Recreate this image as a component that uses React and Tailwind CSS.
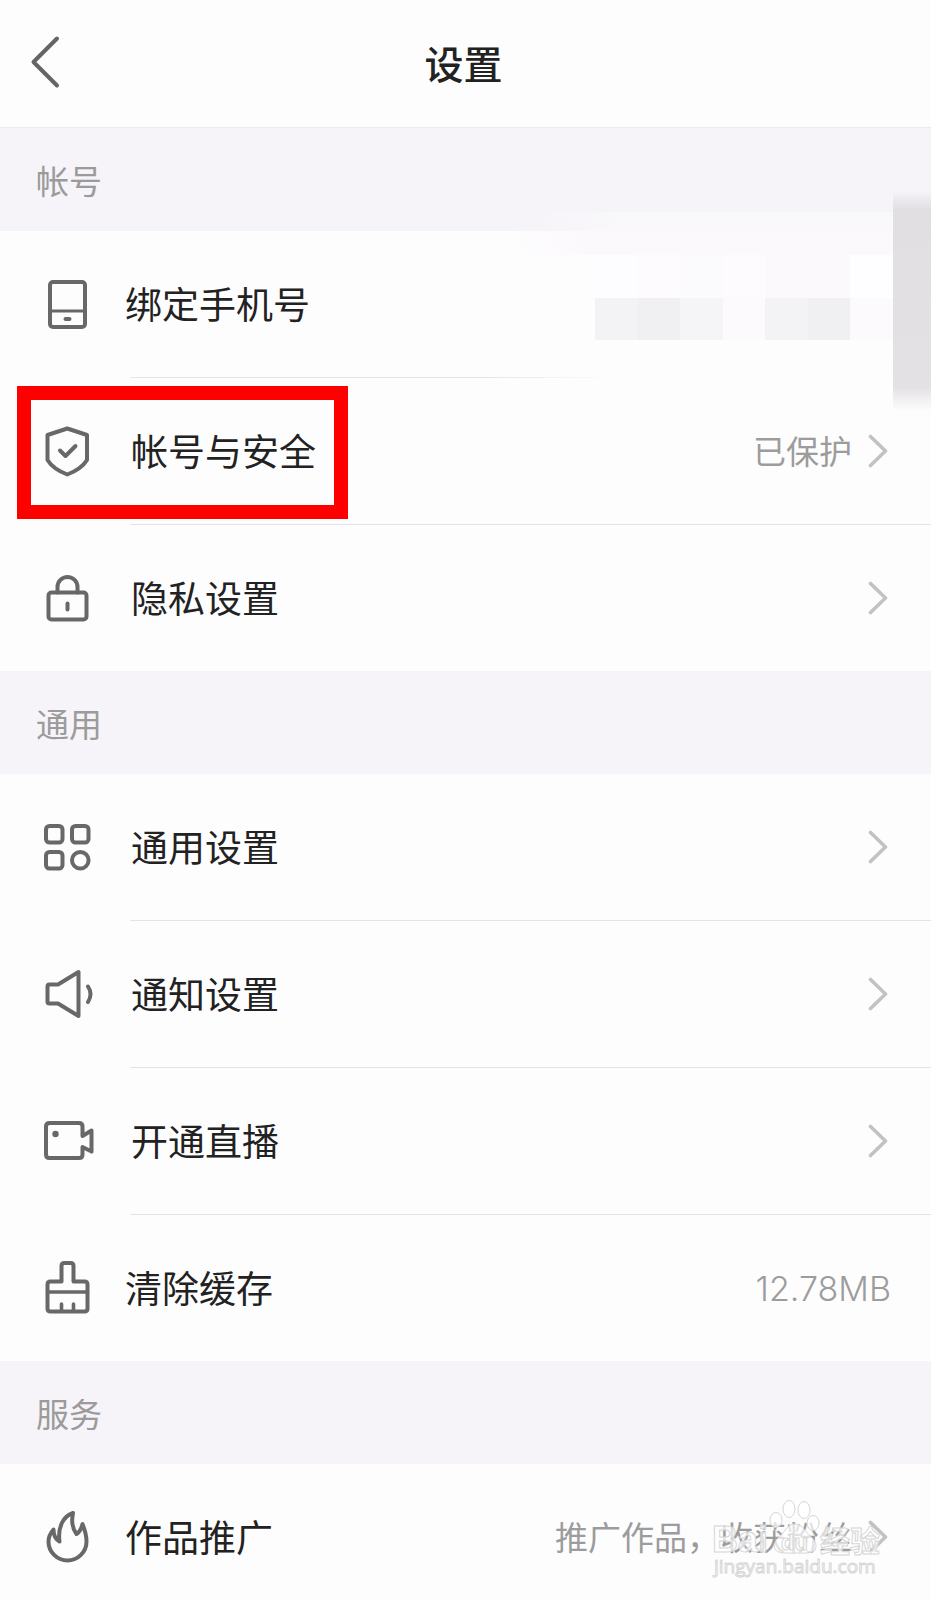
import React from "react";

const iconProps = {
  viewBox: "0 0 54 54",
  fill: "none",
  stroke: "currentColor",
  strokeWidth: 4,
  strokeLinecap: "round",
  strokeLinejoin: "round",
  "aria-hidden": true,
  className: "block size-[54px] shrink-0 text-[#686868]",
};

function PhoneIcon() {
  return (
    <svg {...iconProps}>
      <rect x="10" y="5" width="35" height="45" rx="3" />
      <path d="M10 34h35" strokeWidth="3.2" />
      <path d="M25.5 42h4" />
    </svg>
  );
}

function ShieldIcon() {
  return (
    <svg {...iconProps}>
      <path d="M27.300 4.500 47 11V36C43 42.500 35 47.500 27.300 50.500 19.500 47.500 11.500 42.500 7.500 36V11Z" />
      <path d="M20 26.500 25.500 32 35.500 22" />
    </svg>
  );
}

function LockIcon() {
  return (
    <svg {...iconProps}>
      <rect x="8.500" y="21.500" width="38" height="27" rx="3" />
      <path d="M17.500 21.500V16a10 10 0 0 1 20 0V21.500" />
      <path d="M27.500 32.500v6" />
    </svg>
  );
}

function GridIcon() {
  return (
    <svg {...iconProps}>
      <rect x="6" y="6" width="16.500" height="16.500" rx="3.500" />
      <rect x="32" y="6" width="16.500" height="16.500" rx="3.500" />
      <rect x="6" y="32" width="16.500" height="16.500" rx="3.500" />
      <circle cx="40.300" cy="40.300" r="8.300" />
    </svg>
  );
}

function SpeakerIcon() {
  return (
    <svg {...iconProps}>
      <path d="M7.500 19.500q0-2 2-2h8.500L38.500 5V49L18 36.500H9.500q-2 0-2-2Z" />
      <path d="M48 19.500q5 7.500 0 15.500" />
    </svg>
  );
}

function CameraIcon() {
  return (
    <svg {...iconProps}>
      <path d="M42.500 22V12.500q0-3.500-3.500-3.500H9.500Q6 9 6 12.500V40.500q0 3.500 3.500 3.500H39q3.500 0 3.500-3.500V33L51.500 37.500V16.500L42.500 22" />
      <circle cx="15.500" cy="20" r="3.200" fill="currentColor" stroke="none" />
    </svg>
  );
}

function BrushIcon() {
  return (
    <svg {...iconProps}>
      <path d="M21.500 20.500V5q0-3 3-3h6q3 0 3 3V20.500H44.500q3 0 3 3V47.500q0 3-3 3H10.500q-3 0-3-3V23.500q0-3 3-3Z" />
      <path d="M7.500 31h40M21.500 43v7M33.500 43v7" strokeWidth="3.600" />
    </svg>
  );
}

function FlameIcon() {
  return (
    <svg {...iconProps}>
      <path d="M33 3C23.500 6 17.500 17 19.500 31.500 16 29.500 13.500 25 13.500 19.500 10.500 23 8.500 27 8.500 31.500A19 19 0 0 0 46.500 31.500C46.500 25 44.500 19 42.500 14 41.500 18.500 39.500 22 36.500 24 32 18 31.500 10 33 3Z" />
    </svg>
  );
}

function Chevron() {
  return (
    <svg
      viewBox="0 0 20 34"
      fill="none"
      stroke="#c2c2c2"
      strokeWidth="3.600"
      strokeLinecap="round"
      strokeLinejoin="round"
      aria-hidden="true"
      className="block h-[34px] w-5 shrink-0"
    >
      <path d="M2.500 2.500 17.500 17 2.500 31.500" />
    </svg>
  );
}

function SectionTitle({ children }) {
  return (
    <h2 className="flex h-[103px] items-center bg-[#f6f4f8] px-9 text-[33px] leading-[48px] font-normal text-[#9b9b9b]">
      {children}
    </h2>
  );
}

function Row({ icon, label, value, latin, arrow = true, plain, last, highlighted, masked, children }) {
  return (
    <li className="relative">
      <button
        type="button"
        className={`flex h-[146px] w-full items-center pl-10 text-left ${arrow ? "pr-[43px]" : "pr-10"}`}
      >
        {icon}
        <span
          className={`flex-1 pb-[2px] text-[37px] leading-[54px] text-[#222222] ${plain ? "pl-[31px]" : "pl-[37px]"}`}
        >
          {label}
        </span>
        {value && (
          <span
            className={`text-[#9c9c9c] ${latin ? "pt-[2px] font-['Inter'] text-[34px] leading-[48px] font-light" : "pb-[2px] text-[33px] leading-[48px]"}`}
          >
            {value}
          </span>
        )}
        {arrow && (
          <span className="pl-4">
            <Chevron />
          </span>
        )}
      </button>
      {!last && (
        <div
          className={`ml-[130px] h-px ${masked ? "bg-linear-to-r from-[#e6e5e7] from-45% to-transparent to-60%" : "bg-[#e4e3e5]"}`}
        />
      )}
      {highlighted && (
        <div className="pointer-events-none absolute top-2 left-[17px] h-[133px] w-[331px] border-[14px] border-[#fe0000]" />
      )}
      {masked && <MaskedNumber />}
      {children}
    </li>
  );
}

function MaskedNumber() {
  return (
    <div aria-hidden="true" className="pointer-events-none">
      <div className="absolute -top-[19px] right-0 h-[19px] w-[400px] bg-linear-to-r from-transparent to-[#f9f8fb] to-25%" />
      <div className="absolute top-0 right-0 h-6 w-[430px] bg-linear-to-r from-transparent to-[#fbf9fc] to-20%" />
      <div className="absolute top-6 right-[38px] grid w-[298px] grid-cols-7">
        <i className="h-[43px] bg-[#fdfcfe]" />
        <i className="bg-[#fdfbfe]" />
        <i className="bg-[#fbfafc]" />
        <i className="bg-[#fdfbfe]" />
        <i className="bg-[#fbf9fc]" />
        <i className="bg-[#fbf9fc]" />
        <i className="bg-[#fefdff]" />
        <i className="h-[42px] bg-[#f3f2f4]" />
        <i className="bg-[#f0eff1]" />
        <i className="bg-[#f5f4f6]" />
        <i className="bg-[#fcfafc]" />
        <i className="bg-[#f3f2f4]" />
        <i className="bg-[#f0eff1]" />
        <i className="bg-[#fcfafc]" />
      </div>
      <div className="absolute -top-[40px] right-0 h-[220px] w-[38px] bg-[linear-gradient(to_bottom,transparent,#e1dfe2_18px,#e3e1e4_196px,transparent)]" />
    </div>
  );
}

function Watermark() {
  return (
    <svg
      viewBox="0 0 190 100"
      className="pointer-events-none absolute top-[26px] right-9 h-[100px] w-[190px]"
      fill="#ffffff"
      fillOpacity="0.7"
      stroke="#d6d6d6"
      strokeWidth="1"
    >
      <text x="7" y="62" fontFamily="Liberation Sans" fontWeight="700" fontSize="36">
        Bai
      </text>
      <path d="M90 34C97 34 99 40 103 44 109 49 113 54 110 60 107 64 98 63 90 63 82 63 73 64 70 59 67 53 73 48 77 44 81 40 83 34 90 34Z" />
      <ellipse cx="71" cy="30" rx="6" ry="7.500" />
      <ellipse cx="84" cy="19" rx="6" ry="8.500" />
      <ellipse cx="99" cy="20" rx="6" ry="8.500" />
      <ellipse cx="108" cy="33" rx="6" ry="7.500" />
      <text x="76" y="60" fontFamily="Liberation Sans" fontWeight="700" fontSize="22">
        du
      </text>
      <text x="115" y="62" fontFamily="Noto Sans CJK SC" fontWeight="700" fontSize="30">
        经验
      </text>
      <text x="9" y="83" fontFamily="Open Sans" fontSize="19">
        jingyan.baidu.com
      </text>
    </svg>
  );
}

export default function App() {
  return (
    <div className="w-full overflow-hidden bg-[#fefdfe] font-['Noto_Sans_CJK_SC',sans-serif]">
      <header className="grid h-32 grid-cols-[60px_1fr_60px] items-center border-b border-[#ebeaec] pr-[30px] pb-[3px] pl-[26px]">
        <button type="button" aria-label="返回" className="flex h-[60px] items-center">
          <svg
            viewBox="0 0 40 56"
            fill="none"
            stroke="#656565"
            strokeWidth="4"
            strokeLinecap="round"
            strokeLinejoin="round"
            aria-hidden="true"
            className="block h-14 w-10"
          >
            <path d="M31 4.500 7.500 28 31 51.500" />
          </svg>
        </button>
        <h1 className="text-center text-[39px] leading-[56px] font-medium text-[#222222]">设置</h1>
      </header>
      <main>
        <SectionTitle>帐号</SectionTitle>
        <ul>
          <Row icon={<PhoneIcon />} label="绑定手机号" plain arrow={false} masked />
          <Row icon={<ShieldIcon />} label="帐号与安全" value="已保护" highlighted />
          <Row icon={<LockIcon />} label="隐私设置" last />
        </ul>
        <SectionTitle>通用</SectionTitle>
        <ul>
          <Row icon={<GridIcon />} label="通用设置" />
          <Row icon={<SpeakerIcon />} label="通知设置" />
          <Row icon={<CameraIcon />} label="开通直播" />
          <Row icon={<BrushIcon />} label="清除缓存" value="12.78MB" latin plain arrow={false} last />
        </ul>
        <SectionTitle>服务</SectionTitle>
        <ul>
          <Row icon={<FlameIcon />} label="作品推广" value="推广作品，收获粉丝" plain last>
            <Watermark />
          </Row>
        </ul>
      </main>
    </div>
  );
}
